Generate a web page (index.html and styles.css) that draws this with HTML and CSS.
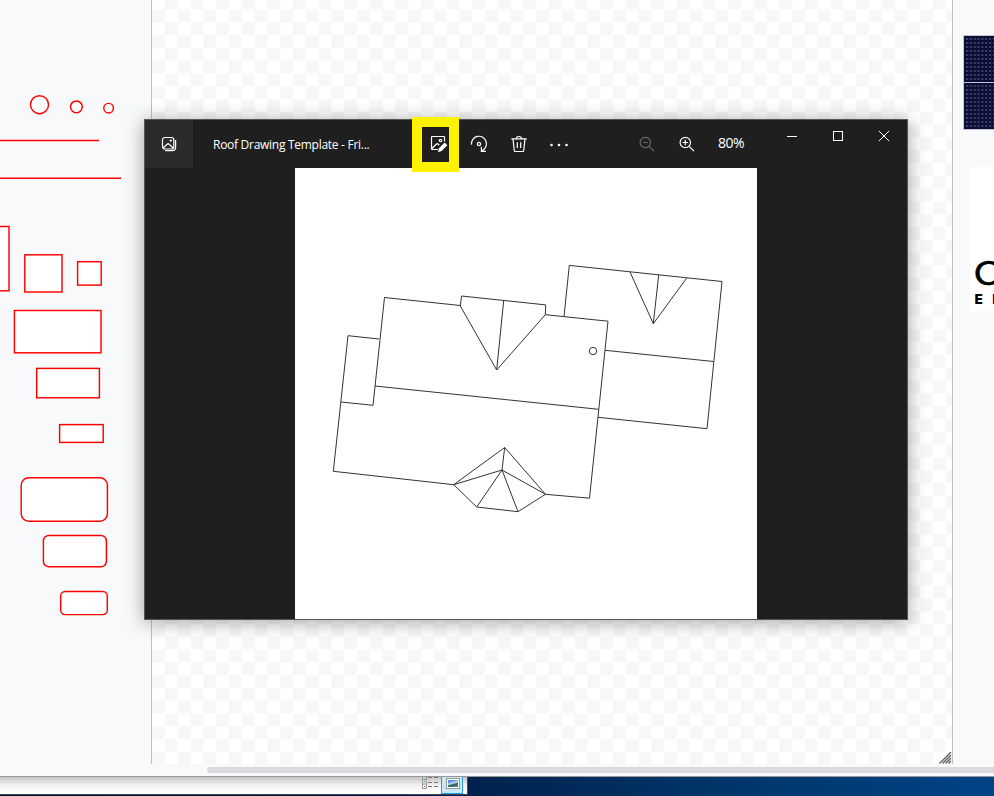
FILE: index.html
```
<!DOCTYPE html>
<html lang="en">
<head>
<meta charset="utf-8">
<title>Roof Drawing Template</title>
<link rel="stylesheet" href="styles.css">
</head>
<body>
<div class="screen">
  <main class="editor">
    <aside class="palette">
      <svg width="151" height="764" viewBox="0 0 151 764" class="shapes">
        <circle cx="39.5" cy="104.7" r="9"/>
        <circle cx="76.4" cy="106.8" r="5.9"/>
        <circle cx="108.6" cy="108.2" r="4.8"/>
        <path d="M-5 140.5H99M-5 178.2H121"/>
        <rect x="-30" y="226.5" width="39" height="64.3"/>
        <rect x="24.8" y="254.8" width="37.2" height="37.2"/>
        <rect x="77.6" y="261.7" width="23.6" height="23.4"/>
        <rect x="14.4" y="310.5" width="86.6" height="42.3"/>
        <rect x="36.7" y="368.4" width="62.7" height="29.4"/>
        <rect x="59.6" y="424.6" width="43.6" height="17.8"/>
        <rect x="21.2" y="477.8" width="86.2" height="43.4" rx="7.5"/>
        <rect x="43.4" y="535.4" width="63" height="31.4" rx="5.5"/>
        <rect x="60.7" y="591.4" width="46.6" height="23.2" rx="4.5"/>
      </svg>
    </aside>
    <section class="canvas">
      <svg width="800" height="764">
        <defs>
          <pattern id="checks" x="0.2" y="-3.3" width="25.6" height="25.6" patternUnits="userSpaceOnUse">
            <path fill="#f7f7f7" d="M12.8 0H25.6V12.8H12.8ZM0 12.8H12.8V25.6H0Z"/>
          </pattern>
        </defs>
        <rect width="800" height="764" fill="url(#checks)"/>
      </svg>
      <svg class="grip" width="13" height="12" viewBox="0 0 13 12"><path d="M0.5 11.5L12 0M3.5 11.5L12 3M6.5 11.5L12 6M9.5 11.5L12 9"/></svg>
    </section>
    <aside class="library">
      <div class="solar"><i></i><i></i></div>
      <div class="brand"><span class="brand-top">C</span><span class="brand-sub">EN</span></div>
    </aside>
  </main>
  <div class="scroll-row"><div class="thumb"></div></div>
  <footer class="desktop">
    <div class="explorer">
      <svg width="17" height="12" viewBox="0 0 17 12">
        <path class="frame" d="M.5 -2V11.5H4.5V-2M.5 2.5H4.5M.5 7H4.5"/>
        <path class="rows" d="M6 .5H10M12 .5H16M6 5.5H10M12 5.5H16M6 9.5H10M12 9.5H16"/>
        <path fill="#4b7fe0" d="M2 4h1v1H2z"/><path fill="#d33" d="M2 9h1v1H2z"/>
      </svg>
      <div class="view-on"><div class="thumbnail"></div></div>
    </div>
  </footer>

  <div class="photos">
    <header class="bar">
      <div class="home">
        <svg width="16" height="16" viewBox="0 0 16 16"><rect x="1.5" y="1.5" width="11.3" height="11.5" rx="2.3"/><path d="M4 14.6H11.2Q14.6 14.6 14.6 11.2V4M2.2 12L6.4 8Q7.1 7.4 7.8 8L12.2 12"/><path d="M9.8 3.4V5.8M8.6 4.6H11" class="thin"/></svg>
      </div>
      <div class="name">Roof Drawing Template - Fri...</div>
      <div class="tools">
        <svg width="18" height="18" viewBox="0 0 18 18"><path d="M8 14.5H2.2Q1.5 14.5 1.5 13.8V2.2Q1.5 1.5 2.2 1.5H13.8Q14.5 1.5 14.5 2.2V6.5M2 13.5L6.5 9Q7.2 8.3 8 9L9.3 10.2"/><circle cx="10.5" cy="5.5" r="1.2"/><path class="fill" d="M14.6 7.4L17.4 10.2L11.6 16L8 17.3L9 13.2Z"/></svg>
        <svg width="18" height="18" viewBox="0 0 18 18"><path d="M1.5 9.6A7.5 7.5 0 1 1 11.8 15.7M11.4 11.8V16.3H16"/><circle cx="9" cy="9" r="1.6"/></svg>
        <svg width="18" height="18" viewBox="0 0 18 18"><path d="M1.3 3.8H16.7M6.5 3.5Q6.5 1.5 9 1.5T11.5 3.5M3 4L4.3 15.7Q4.4 16.5 5.2 16.5H12.8Q13.6 16.5 13.7 15.7L15 4M7.3 7.3V13M10.7 7.3V13"/></svg>
        <svg width="22" height="18" viewBox="0 0 22 18"><g class="dots"><circle cx="3.5" cy="10" r="1.35"/><circle cx="11" cy="10" r="1.35"/><circle cx="18.5" cy="10" r="1.35"/></g></svg>
      </div>
      <div class="zoom">
        <svg class="off" width="16" height="16" viewBox="0 0 16 16"><circle cx="6.3" cy="6.5" r="5.2"/><path d="M10.1 10.3L15 15.2M3.8 6.5H8.8"/></svg>
        <svg class="on" width="16" height="16" viewBox="0 0 16 16"><circle cx="6.3" cy="6.5" r="5.2"/><path d="M10.1 10.3L15 15.2M3.5 6.5H9.1M6.3 3.7V9.3"/></svg>
        <span>80%</span>
      </div>
      <div class="controls">
        <svg width="12" height="12" viewBox="0 0 12 12"><path d="M1 6.5H11"/></svg>
        <svg width="12" height="12" viewBox="0 0 12 12"><rect x="1.5" y="1.5" width="9" height="9"/></svg>
        <svg width="12" height="12" viewBox="0 0 12 12"><path d="M1 1L11 11M11 1L1 11"/></svg>
      </div>
    </header>
    <div class="viewer">
      <svg class="roof" width="462" height="451" viewBox="295 168 462 451">
        <path d="M460.3 305.5L384.5 297.5L373 405.3L341 402M379 339L348 335.7L333.3 471.3L453.7 484.7M375 386L598.7 409.3M460.3 306L461.5 296L545.7 304.9L545.3 314.7L496.7 370ZM503.7 300.5L496.7 370M545.3 314.7L608 321.2L589.5 498.2L545.5 494.3"/>
        <path d="M504.7 447.5L453.7 484.7L476.7 507L518 511.7L545.5 494.3ZM504.7 447.5L502 470M453.7 484.7L502 470L545.5 494.3M476.7 507L502 470L518 511.7"/>
        <path d="M564 316.5L569.3 265.4L722 281.5L707 428.7L598 417.3M605 350.3L713.5 361.5M630 272L653.3 323.7L686.7 278.1M658.7 275L653.3 323.7"/>
        <circle cx="593" cy="351" r="3.7"/>
      </svg>
    </div>
    <div class="highlight"></div>
  </div>
</div>
</body>
</html>
```
FILE: styles.css
```
* { box-sizing: border-box; }
body { margin: 0; font-family: "Open Sans", "Noto Sans", sans-serif; }
svg { display: block; fill: none; flex: none; }
.screen {
  position: relative;
  width: 994px;
  height: 796px;
  overflow: hidden;
  display: flex;
  flex-direction: column;
  background: #f8f9fb;
}
.editor { display: flex; height: 764px; flex: none; }
.palette { width: 151px; flex: none; }
.shapes { fill: #fff; stroke: #f00; stroke-width: 1.45; }
.canvas {
  position: relative;
  width: 802px;
  flex: none;
  border: solid #bfbfbf;
  border-width: 0 1px;
  background: #fff;
}
.grip { position: absolute; right: 0; bottom: 0; stroke: #555; stroke-width: 1.15; }
.library { flex: 1; padding: 35px 0 0 10px; overflow: hidden; }
.solar {
  display: flex;
  flex-direction: column;
  gap: 1px;
  width: 60px;
  height: 95px;
  padding: 1px;
  background: #c5c3d2;
}
.solar i {
  flex: 1;
  background:
    radial-gradient(circle, #a3a5c4 0.3px, transparent 0.9px) 1px 1px / 3.85px 4px,
    linear-gradient(90deg, transparent 3px, #10133a 3px) 1px 0 / 3.85px 4px,
    #080b34;
}
.brand {
  display: flex;
  flex-direction: column;
  width: 150px;
  height: 144px;
  margin: 37px 0 0 7px;
  padding: 87px 0 0 4px;
  background: #fff;
  color: #000;
  white-space: nowrap;
}
.brand-top {
  width: 24px;
  font: 400 32px/37px Lato, sans-serif;
  -webkit-text-stroke: 0.5px #000;
  transform: scaleX(1.14);
  transform-origin: 0 50%;
}
.brand-sub { font: 700 13.5px/17px "DejaVu Sans", sans-serif; letter-spacing: 8.5px; }
.scroll-row { height: 13px; flex: none; padding: 3px 0 0 207px; border-bottom: 1px solid #989898; }
.thumb { width: 900px; height: 6px; border-radius: 3px; background: #dadbdf; }
.desktop { flex: 1; background: linear-gradient(90deg, #001126 0, #00224d 470px, #003468 700px, #004386 994px); }
.explorer {
  display: flex;
  justify-content: flex-end;
  gap: 2px;
  width: 468px;
  height: 18px;
  padding-right: 4px;
  border-right: 1px solid #3a4c63;
  border-bottom: 1px solid #3a4350;
  background: linear-gradient(#c4c4c4, #f0f0f0 8px, #fff 16px);
}
.frame { stroke: #999; }
.rows { stroke: #777; }
.view-on { width: 22px; height: 17px; padding: 1px 4px; border: 1px solid #26a0da; border-top: 0; background: #cbe8f6; }
.thumbnail { width: 14px; height: 11px; border: 1px solid #999; box-shadow: inset 0 0 0 1px #fff; background: linear-gradient(165deg, #5d8be8 25%, #bddbf5 48%, #2e6253 60%, #6aa0b0); }

.photos {
  position: absolute;
  left: 144px;
  top: 119px;
  width: 764px;
  height: 501px;
  display: flex;
  flex-direction: column;
  border: 1px solid #555;
  background: #1f1f1f;
  box-shadow: 0 2px 18px rgba(0, 0, 0, 0.36);
}
.bar { display: flex; height: 48px; flex: none; color: #fff; }
.bar svg { stroke: #fff; stroke-width: 1.2; }
.home { width: 48px; padding: 16px; background: #2b2b2b; }
.home .thin { stroke-width: 1; }
.name { width: 217px; padding-left: 20px; font-size: 12px; line-height: 49px; letter-spacing: -0.28px; white-space: nowrap; }
.tools { display: flex; gap: 22px; width: 200px; padding: 15px 0 0 20px; }
.tools .fill { fill: #fff; stroke: none; }
.tools .dots { fill: #fff; stroke: none; }
.tools svg:last-child { margin-left: -2px; }
.zoom { display: flex; gap: 24px; width: 167px; padding: 16px 0 0 29px; }
.bar .zoom .off { stroke: #6a6a6a; }
.zoom span { margin-left: -1px; font-size: 14px; line-height: 14px; letter-spacing: -0.45px; }
.controls { display: flex; gap: 34px; padding-top: 10px; margin-left: 9px; }
.controls svg { stroke-width: 1; }
.viewer { display: flex; justify-content: center; height: 451px; }
.roof { background: #fff; stroke: #333; stroke-width: 1; }
.highlight { position: absolute; left: 267px; top: -3px; width: 47px; height: 55px; border: 10px solid #fff200; }
```
